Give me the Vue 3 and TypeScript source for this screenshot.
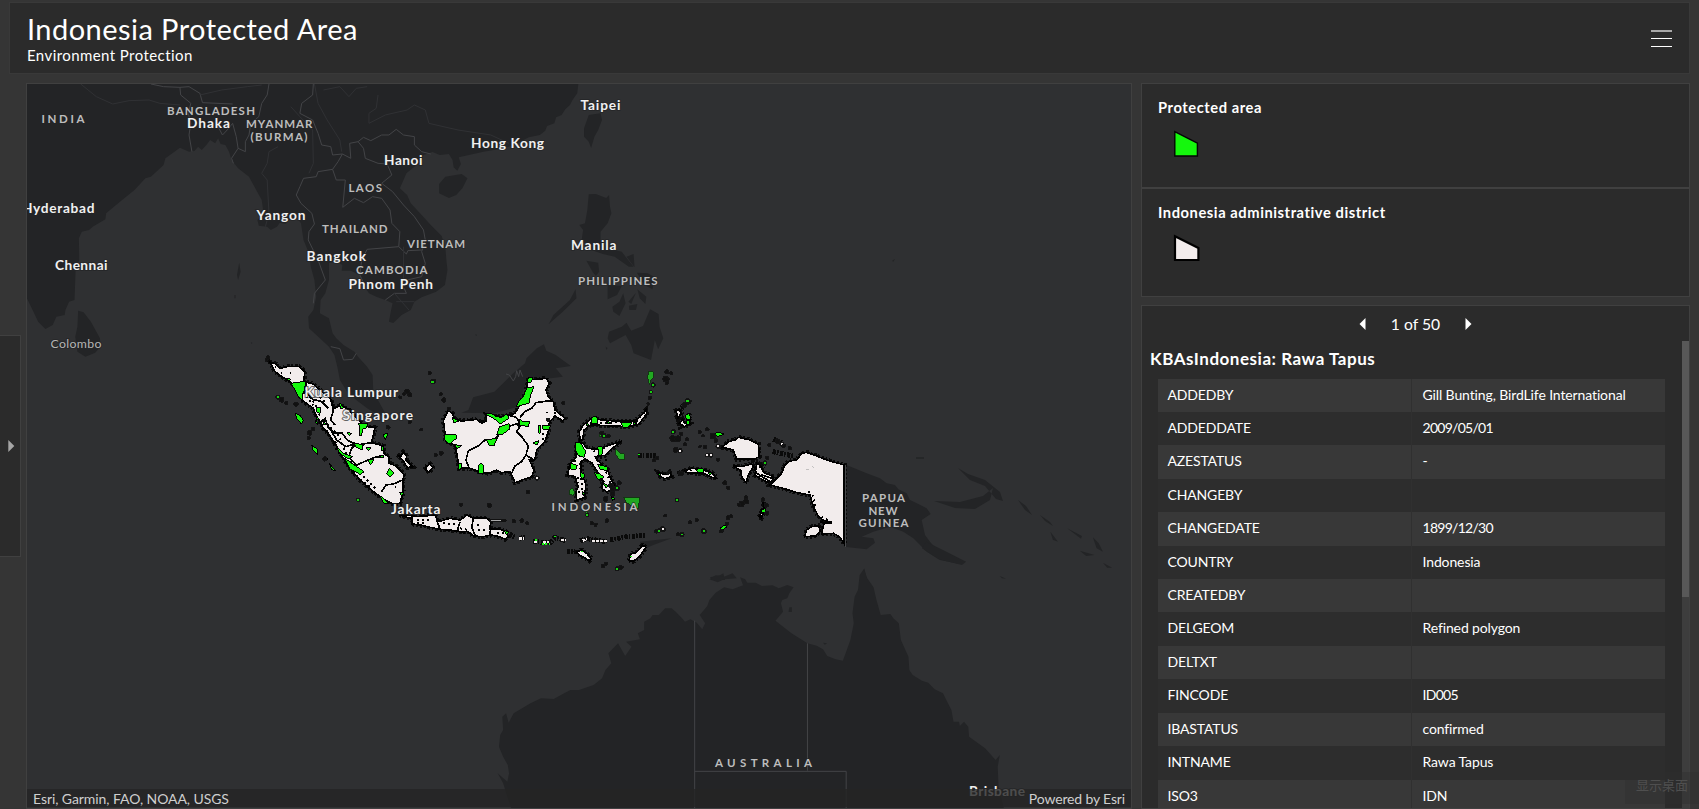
<script setup lang="ts">
interface Label { t: string; x: number; y: number; w: number; k: 'country' | 'city' | 'minor' }

const labels: Label[] = [
  { t: 'INDIA', x: 41.5, y: 123, w: 43, k: 'country' },
  { t: 'BANGLADESH', x: 167, y: 115, w: 88, k: 'country' },
  { t: 'MYANMAR', x: 246, y: 128, w: 66.5, k: 'country' },
  { t: '(BURMA)', x: 250.5, y: 140.5, w: 57, k: 'country' },
  { t: 'LAOS', x: 348.5, y: 192, w: 33.5, k: 'country' },
  { t: 'THAILAND', x: 322, y: 233, w: 65.5, k: 'country' },
  { t: 'VIETNAM', x: 407, y: 248, w: 58, k: 'country' },
  { t: 'CAMBODIA', x: 356, y: 273.5, w: 71.5, k: 'country' },
  { t: 'PHILIPPINES', x: 578, y: 285, w: 79.5, k: 'country' },
  { t: 'INDONESIA', x: 551.5, y: 511, w: 86, k: 'country' },
  { t: 'PAPUA', x: 862, y: 502, w: 43, k: 'country' },
  { t: 'NEW', x: 868.5, y: 514.5, w: 29, k: 'country' },
  { t: 'GUINEA', x: 858.5, y: 527, w: 50, k: 'country' },
  { t: 'AUSTRALIA', x: 715, y: 767, w: 97, k: 'country' },
  { t: 'Dhaka', x: 187, y: 128, w: 43, k: 'city' },
  { t: 'Hyderabad', x: 22, y: 213, w: 72.5, k: 'city' },
  { t: 'Yangon', x: 256.5, y: 220, w: 49, k: 'city' },
  { t: 'Bangkok', x: 306.5, y: 261, w: 59.5, k: 'city' },
  { t: 'Chennai', x: 55, y: 269.5, w: 52.5, k: 'city' },
  { t: 'Hanoi', x: 384, y: 165, w: 38.5, k: 'city' },
  { t: 'Hong Kong', x: 471, y: 148, w: 73, k: 'city' },
  { t: 'Phnom Penh', x: 348.5, y: 289, w: 84.5, k: 'city' },
  { t: 'Kuala Lumpur', x: 304.5, y: 397, w: 93.5, k: 'city' },
  { t: 'Singapore', x: 342.5, y: 420, w: 70.5, k: 'city' },
  { t: 'Jakarta', x: 391, y: 514, w: 49.5, k: 'city' },
  { t: 'Taipei', x: 580.5, y: 110, w: 40, k: 'city' },
  { t: 'Manila', x: 571, y: 250, w: 45.5, k: 'city' },
  { t: 'Brisbane', x: 969, y: 796, w: 56, k: 'city' },
  { t: 'Colombo', x: 50.5, y: 348, w: 51, k: 'minor' },
]

// Small islands: x, y, radius, fill key (k: outline only, g: protected, w: district)
type Islet = [number, number, number, 'k' | 'g' | 'w']
const islets: Islet[] = [
  [268, 358, 1.6, 'k'], [266, 360, 1.2, 'k'], [278, 397, 1.6, 'g'], [282, 400, 2, 'k'], [286, 403, 1.4, 'k'], [296, 404, 1.8, 'k'],
  [310, 433, 2, 'k'], [313, 429, 1.6, 'k'], [309, 438, 1.5, 'k'], [325, 459, 1.8, 'k'], [358, 500, 1.6, 'g'],
  [407, 391, 2, 'k'], [410, 395, 1.6, 'k'], [404, 394, 1.4, 'k'], [400, 397, 1.2, 'k'], [410, 422, 1.3, 'k'], [421, 430, 1.2, 'k'], [388, 427, 1.6, 'k'],
  [430, 373, 1.2, 'k'], [433, 382, 2.2, 'g'], [441, 394, 1.5, 'k'], [444, 400, 1.7, 'k'], [449, 409, 1.4, 'k'], [441, 453, 1.8, 'k'], [436, 455, 1.2, 'k'],
  [461, 505, 1.4, 'k'], [489, 505, 2, 'k'], [528, 492, 1.4, 'k'], [522, 521, 1.8, 'k'], [527, 523, 1.3, 'k'], [514, 521, 1.3, 'k'], [548, 420, 1.3, 'k'], [563, 403, 1.5, 'k'], [537, 478, 1.8, 'w'],
  [667, 372, 1.8, 'k'], [671, 373, 1.3, 'k'], [666, 379, 2.4, 'k'], [667, 383, 1.5, 'k'], [653, 385, 2, 'g'], [651, 392, 1.5, 'g'], [650, 398, 1.3, 'k'], [648, 404, 1.2, 'k'],
  [688, 401, 2.4, 'g'], [685, 405, 2, 'k'], [673, 432, 2, 'g'], [673, 438, 2.6, 'k'], [678, 439, 2.4, 'k'], [681, 434, 1.6, 'k'], [687, 439, 1.4, 'k'], [676, 450, 2, 'k'], [680, 451, 2, 'w'], [685, 444, 1.3, 'k'],
  [700, 432, 1.2, 'k'], [703, 436, 1.1, 'k'], [707, 429, 1.6, 'k'], [713, 436, 2.2, 'k'], [716, 441, 1.6, 'k'], [718, 446, 2, 'w'],
  [705, 447, 1.5, 'k'], [700, 447, 1.2, 'k'], [707, 455, 1.6, 'w'], [711, 455, 1.6, 'w'], [718, 460, 1.4, 'k'], [654, 460, 1.5, 'k'], [657, 458, 1.5, 'k'],
  [604, 436, 2, 'g'], [608, 436, 1.8, 'k'], [602, 433, 1.6, 'k'], [607, 521, 1.6, 'k'], [587, 515, 1.5, 'g'], [592, 523, 1.5, 'k'], [596, 525, 1.3, 'k'],
  [612, 490, 2.4, 'k'], [617, 488, 2, 'g'], [613, 494, 2, 'k'], [619, 483, 2, 'k'], [611, 485, 2, 'k'], [606, 499, 2, 'k'],
  [668, 473, 1.4, 'k'], [681, 473, 2, 'k'],
  [725, 483, 1.6, 'k'], [728, 488, 1.6, 'k'], [746, 501, 2.2, 'k'], [742, 504, 2.2, 'k'], [739, 505, 1.6, 'k'], [746, 497, 1.3, 'k'],
  [677, 500, 1.5, 'g'], [665, 516, 1.3, 'k'], [690, 522, 1.3, 'k'], [697, 520, 1.2, 'k'], [728, 518, 1.8, 'k'], [731, 516, 1.4, 'k'], [704, 531, 2, 'g'], [727, 524, 1.5, 'k'], [721, 531, 1.6, 'k'],
  [682, 534.5, 1.8, 'g'], [678, 534.5, 1.4, 'k'], [656, 531, 1.8, 'k'], [663, 529, 2, 'w'], [659, 531, 1.6, 'g'],
  [766, 505, 2, 'k'], [767, 513, 1.6, 'k'], [763, 500, 1.6, 'k'],
  [777, 441, 2.2, 'k'], [782, 444, 1.6, 'w'], [784, 446, 1.4, 'k'], [769, 445, 1.5, 'k'], [790, 448, 1.4, 'k'], [765, 463, 1.8, 'g'], [767, 458, 1.6, 'k'],
  [603, 566, 1.4, 'k'], [606, 564, 1.3, 'k'], [617, 569, 2, 'g'], [621, 567, 1.8, 'k'],
]

// Irregular island shape; the index varies the silhouette
const blob = (x: number, y: number, r: number, i: number): string => {
  const pts: string[] = []
  for (let n = 0; n < 8; n++) {
    const a = (n / 8) * Math.PI * 2
    const k = r * (0.75 + 0.55 * Math.abs(Math.sin(i * 7.3 + n * 2.9)))
    pts.push(`${(x + Math.cos(a) * k).toFixed(1)},${(y + Math.sin(a) * k).toFixed(1)}`)
  }
  return pts.join(' ')
}

const attributes: [string, string, boolean?][] = [
  ['ADDEDBY', 'Gill Bunting, BirdLife International'], ['ADDEDDATE', '2009/05/01', true], ['AZESTATUS', '-'], ['CHANGEBY', ''],
  ['CHANGEDATE', '1899/12/30', true], ['COUNTRY', 'Indonesia'], ['CREATEDBY', ''], ['DELGEOM', 'Refined polygon'], ['DELTXT', ''],
  ['FINCODE', 'ID005', true], ['IBASTATUS', 'confirmed'], ['INTNAME', 'Rawa Tapus'], ['ISO3', 'IDN'],
]

// District outlines, drawn once as a black rim and once filled
const west = [
  'M30 66L48 72 60 86 80 80 118 80 134 95 132 125 160 132 180 150 212 176 222 205 240 197 262 205 280 225 298 240 310 258 345 263 340 285 335 308 370 318 372 340 388 352 388 370 408 378 425 395 432 405 428 425 430 455 420 490 400 492 375 480 340 455 300 420 265 380 245 345 225 310 205 280 190 265 168 225 160 205 125 180 115 150 90 125 65 110 45 95Z',
  'M412 345L422 350 430 336 440 348 438 360 458 380 442 383 428 360Z',
  'M497 380L510 372 518 382 508 396 498 392Z',
  'M418 524L440 525 470 530 525 525 535 545 570 535 600 540 612 532 620 525 640 535 680 535 692 545 690 568 720 568 738 575 745 590 735 598 720 590 695 585 670 590 640 588 625 575 600 575 570 570 540 568 510 562 480 555 455 552 458 535 440 532Z',
]
const centre = [
  'M85 152L98 160 103 178 125 183 170 178 185 190 200 182 198 165 245 170 265 165 285 160 300 135 318 95 325 60 380 55 388 70 378 90 385 110 400 125 405 150 420 162 435 175 428 182 405 168 388 188 385 215 375 245 350 270 345 298 328 300 342 330 335 350 285 368 275 345 270 335 245 338 230 330 205 340 185 338 150 325 118 325 112 290 105 255 78 245 70 180Z',
  'M478 215L490 195 515 175 545 180 600 184 645 183 660 170 678 150 680 162 655 194 625 200 540 196 512 194 492 210 488 240 480 240Z',
  'M468 252L478 246 490 250 500 265 535 268 550 262 570 255 605 243 590 256 575 266 555 286 525 290 545 314 562 326 570 350 582 375 578 392 560 395 545 385 548 365 538 345 515 308 495 297 484 305 484 340 497 370 495 412 470 420 468 395 474 380 466 350 443 345 450 310 468 292Z',
  'M626 602L633 582 648 578 668 556 678 562 658 590 640 604Z', 'M470 576L485 570 500 580 514 596 508 602 492 592 480 586Z',
]
const east = [
  'M247 262L265 245 285 240 295 232 330 240 355 252 358 290 345 296 290 298 280 270Z',
  'M280 318L305 320 335 312 340 320 325 345 318 368 305 350 303 332Z',
  'M350 310L360 316 372 338 400 350 396 364 380 366 345 346Z',
  'M390 375L425 340 435 315 448 303 470 300 485 280 500 277 520 284 560 300 613 315 613 552 598 530 580 520 545 522 552 490 572 487 548 480 535 468 520 440 510 405 470 398 430 385Z',
  'M494 530L500 510 515 500 535 497 541 512 528 528Z',
  'M135 332L155 324 175 328 200 331 215 338 230 354 215 352 195 342 170 340 140 338Z',
  'M55 338L75 344 88 336 95 350 75 356 62 350Z',
  'M108 152L118 148 124 160 114 174Z', 'M118 190L128 178 134 190 146 192 134 200Z', 'M358 470L365 455 370 460 364 474Z', 'M370 430L376 436 372 444Z',
]
</script>

<template>
  <div class="app">
    <header class="bar">
      <div>
        <h1>Indonesia Protected Area</h1>
        <p class="sub">Environment Protection</p>
      </div>
      <svg class="burger" width="21" height="20" viewBox="0 0 21 20"><path d="M0 2H21" stroke="#c9c9c9" stroke-width="1.6" /><path d="M0 9.5H21M0 17.5H21" stroke="#fff" stroke-width="1.1" /></svg>
    </header>

    <main class="body">
      <aside class="rail">
        <button class="tab" aria-label="Expand"><svg width="7" height="12" viewBox="0 0 7 12"><path d="M.3 0L6.3 6 .3 12Z" fill="#a5a5a5" /></svg></button>
      </aside>

      <section class="panel map">
        <svg class="canvas" viewBox="27 84 1104 724" width="1104" height="724">
          <rect x="27" y="84" width="1104" height="724" fill="#2f3032" />
          <g class="land">
            <g transform="translate(0 80) scale(.3635 .33333)">
              <path d="M74 12L1591 12 1588 40 1575 60 1568 75 1555 88 1545 105 1530 112 1525 130 1505 138 1500 152 1485 165 1455 172 1430 185 1400 200 1370 208 1330 215 1290 225 1262 232 1268 252 1258 272 1248 262 1245 240 1235 222 1210 225 1190 216 1165 225 1160 245 1140 260 1118 280 1108 305 1100 325 1120 345 1130 370 1160 405 1185 435 1215 468 1225 500 1228 540 1231 570 1224 615 1200 635 1160 652 1140 665 1130 690 1105 705 1082 729 1070 725 1075 695 1080 670 1060 660 1035 650 1015 640 1000 615 990 585 965 572 940 572 942 555 928 545 905 548 905 600 895 640 882 660 880 700 905 715 915 760 925 775 945 795 975 815 985 830 1010 860 1025 885 1027 935 1050 980 1065 1010 1040 1005 1010 985 980 960 955 935 935 900 928 860 920 825 905 800 880 775 850 745 848 710 862 690 870 650 865 600 855 560 850 520 835 480 828 430 818 415 795 420 785 432 770 428 762 440 745 450 735 440 712 437 708 420 725 400 720 360 700 320 685 290 655 265 637 240 630 215 620 195 607 192 600 175 592 190 578 180 570 192 555 210 545 200 535 213 520 215 495 203 480 215 455 235 450 255 430 275 415 290 400 295 370 330 330 365 292 400 290 418 255 440 245 450 225 455 217 475 218 540 208 570 205 660 190 665 180 690 178 705 155 710 145 735 125 747 105 725 92 695 74 655Z" />
              <path d="M215 692L230 697 250 725 275 775 276 800 262 818 235 830 213 815 207 770 213 740ZM1225 290L1270 282 1286 295 1272 325 1255 345 1235 354 1208 340 1208 312ZM658 548L662 575 655 600 652 585ZM645 645h3v10h-3zM690 785l4 4-2 4z" />
            </g>
            <g transform="translate(400 80) scale(.4719 .33333)">
              <path d="M400 105L425 100 428 120 420 150 412 170 405 204 400 185 390 170 390 145ZM400 343L415 342 437 354 443 345 445 380 448 400 440 430 425 455 425 480 440 505 470 515 478 530 495 560 485 560 470 545 455 530 430 522 405 510 385 480 388 450 380 435 392 430 397 390ZM395 542L420 548 422 575 415 588 408 575ZM372 628L374 655 345 695 315 733 325 705 360 660ZM440 615L470 618 460 645 440 658ZM450 680L465 665 473 640 478 670 465 708 452 695ZM484 665L500 638 490 672ZM502 578L525 580 540 592 535 628 518 615ZM503 628L522 650 520 672 508 655ZM485 677L503 672 500 690 486 690ZM440 775L443 755 470 740 480 728 490 752 515 738 530 688 548 702 550 740 558 775 547 808 540 780 532 840 510 828 495 820 490 795 478 765 445 790ZM480 530l15-8 2 40zM436 800l4 4-3 6z" />
              <path d="M130 998L145 990 155 952 200 935 240 880 265 850 268 835 290 805 305 793 310 812 330 825 362 858 330 865 345 890 320 895 270 895 250 980 200 1000ZM1043 542l6-6-4 10zM160 762l3 3-2 4z" />
            </g>
            <g transform="translate(640 360) scale(.33333)">
              <path d="M612 312L680 340 720 355 740 370 765 375 775 388 800 400 810 420 835 432 860 445 872 462 845 480 855 525 870 545 900 580 960 600 960 612 900 600 860 575 820 535 790 515 750 500 700 515 665 530 700 535 705 548 680 568 612 560ZM828 292h24v4h-24zM665 645l8-20 8 35h-20zM210 652l30-6 10-6 5 20h-40zM0 545L95 535 40 555 0 572Z" />
            </g>
            <path d="M934 501L955 508 975 509 990 500 993 488 983 496 960 502ZM958 468L968 474 985 480 1000 492 1003 501 996 499 985 486 970 480ZM1018 500l8 6 6 9-7-5zM1040 515l10 7 3 4-8-5z" />
            <g transform="translate(480 500) scale(.4209 .33333)">
              <path d="M75 927L65 890 55 850 42 820 65 845 69 820 66 795 55 770 45 740 48 705 55 690 53 650 62 640 68 668 80 640 120 610 145 595 175 597 200 580 215 570 235 570 270 555 290 535 298 510 312 490 305 460 328 430 345 468 360 440 347 425 380 418 375 400 390 390 390 365 405 355 410 345 425 345 440 325 455 325 465 335 480 355 487 365 500 358 515 368 528 388 535 370 522 345 540 318 545 300 560 278 580 262 600 268 625 256 618 232 630 238 635 248 655 248 670 258 695 256 710 265 730 255 745 262 735 280 730 295 718 300 715 310 720 335 702 362 740 400 778 430 800 437 815 448 825 468 845 478 862 482 870 455 880 420 888 370 885 340 890 290 898 270 902 225 912 207 920 235 935 262 942 300 952 345 975 342 982 355 995 370 1000 420 1018 470 1020 510 1028 525 1050 542 1065 548 1080 568 1100 580 1110 605 1120 630 1125 665 1138 665 1140 678 1150 665 1160 680 1162 710 1200 745 1225 780 1235 765 1230 800 1232 860 1245 927Z" />
              <path d="M545 238L560 226 580 230 600 220 610 235 580 238 565 247ZM735 322h6v14h-8zM815 428l10 2-6 4zM1060 125L1100 150 1155 185 1145 195 1090 178 1050 145ZM1355 95l12 20 6 10-12-6zM1395 85L1430 108 1428 116ZM1456 112L1470 130 1480 155 1465 145ZM1425 152L1460 165 1440 168ZM1480 188L1502 203 1490 203ZM1235 228L1250 236 1240 235Z" />
            </g>
          </g>

          <g class="lines">
            <g transform="translate(0 80) scale(.3635 .33333)">
              <path d="M415 12L450 20 495 22 497 45 525 70 518 100 525 130 520 165 528 215M495 22L520 20 550 40 557 68 640 72M600 140L612 165 625 150 640 130 650 170 655 205 637 235 642 250M740 12L735 45 720 70 712 110 690 130 685 165 675 185 675 215 655 205M862 12L860 45 830 70 825 100 860 120 875 160 885 195 910 200 915 225 942 222 930 245 915 268 875 275 870 290 835 295 825 320 815 345 828 370 858 400 865 432 850 455 848 480 875 540 895 600 865 640 862 670" />
              <path d="M942 222L965 235 962 190 985 185 1000 205 1005 235 1040 250 1065 252 1078 285 1050 310 1080 335 1110 375 1140 410 1165 450 1170 480 1160 515 1170 550 1160 590 1120 600M985 185L1000 172 1020 182 1050 165 1070 165 1090 148 1110 165 1140 170 1140 195 1160 215 1185 222M915 268L925 300 950 300 943 382 975 355 1000 368 1025 350 1050 355 1073 390 1078 430 1100 455 1097 500 1010 508 995 540 990 585 1003 615M1097 500L1118 522 1122 512 1160 510M1060 660L1085 640 1118 640 1112 625M910 800L935 806 945 840 970 838 980 820" />
            </g>
            <g transform="translate(420 360) scale(.33333)"><path d="M258 42L268 45 280 63 287 50 290 32 296 50 300 30 308 50" /></g>
            <g transform="translate(480 500) scale(.4209 .33333)"><path d="M510 362V927M778 430V812M510 814H870V927" /></g>
          </g>
          <g class="faint" transform="translate(0 80) scale(.3635 .33333)">
            <path d="M222 12L265 50 310 72 355 62 410 60 440 70 495 75M550 45L610 30 680 20 720 15M865 12L875 70 900 120 935 180 940 215M800 80L825 110 860 150 862 250 850 280M765 200L740 215 735 250 720 280 735 300 740 400 730 440M1040 45L1035 85 1015 100 1015 130 1060 105 1120 90 1140 75 1170 90 1180 130 1260 150 1350 165 1400 190M890 30L935 20 960 50 980 25 1010 20M1110 600V500M1085 640L1125 690M1090 665H1140" />
          </g>

          <g class="overlay">
            <g transform="translate(260 340) scale(.33333)">
              <path v-for="d in west" :key="d" :d="d" class="rim" />
              <path v-for="d in west" :key="d" :d="d" class="district" />
              <path class="province" d="M140 130L132 150 158 178 185 185 205 205M212 176L220 210 212 240 225 255M178 250L195 235 205 262 225 280 245 278 262 300 290 315 335 308M212 270L230 300 258 320 285 312M268 345L275 325 290 310M265 350L290 375 320 362 345 352 372 350M365 455L378 435 400 432 428 420" />
              <path class="province" d="M530 540L540 568M600 545L592 572 615 580M640 538L635 560 645 585M692 560L690 585" />
              <path class="speckle" d="M45 82h3M62 100h3M90 100h4M150 170L180 215 175 240M190 240L235 285 250 320 262 350 300 400 350 450M470 540h40M470 550h30M550 550L585 552M600 565l25 5M655 570h20M650 555h8M710 580h25M405 440h3M265 280h12M185 255L210 290M120 145L160 195M180 170l18 20M200 270L230 330 280 400 330 440" />
              <path class="green" d="M92 130L136 124 134 150 126 165 128 184 114 168 106 150ZM106 220L120 226 130 240 124 252 110 236ZM170 201L182 203 180 220 169 215ZM238 188L252 203 242 207ZM296 250L324 250 318 264 308 268 304 288 298 288 300 268ZM281 308L310 316 306 330 288 322ZM228 318L250 340 278 350 264 356 240 340ZM254 354L275 370 312 395 302 404 270 387ZM380 402L388 386 402 398 390 412ZM155 316L174 328 174 344 160 332ZM208 370L226 392 214 388ZM322 358L342 360 332 374ZM368 284L384 280 376 300ZM418 458L432 456 426 468ZM356 345L372 348 366 355ZM355 462L387 492 373 492ZM195 350l10 8-10-2zM80 115l14 3-8 6zM165 225l14 14-8 0zM318 322l16 2-8 8zM733 572l14 4-8 8zM188 240l10 12-8 2zM262 278l14 2-8 6zM364 318l8 2-2 12-6-2zM168 240l6 14-6-4zM218 300l12 8-8 0z" />
              <rect x="688" y="536" width="52" height="11" rx="4" fill="#111" />
              <path class="madura" d="M694 541.500H722" />
            </g>

            <g transform="translate(420 360) scale(.33333)">
              <path v-for="d in centre" :key="d" :d="d" class="rim" />
              <path v-for="d in centre" :key="d" :d="d" class="district" />
              <path class="province" d="M148 325L138 300 145 272 175 258 195 240 225 238 245 215 270 198 300 188 288 172 265 165M300 172L315 155 335 145 348 128 375 124 400 122M288 190L300 200 290 215 305 230 325 258 318 285 345 302M318 285L305 305 285 318 275 340M178 185L192 182" />
              <path class="speckle" d="M382 155v5M402 160h5M372 205l-5 40M335 300v25M485 255L480 290M520 275L560 260M465 300L455 330M480 310L488 400M530 300L560 340 575 380M475 395h15M495 190L660 185M650 185L675 155M540 350l20 25M550 325l10 10M475 350v20M560 300l-20-6" />
              <path class="green" d="M72 225L108 225 110 235 103 240 88 252 74 240ZM96 172L116 183 102 188ZM190 158L215 162 230 170 245 172 262 161 267 175 240 192 225 178ZM238 200L268 191 270 207 245 224 230 224ZM200 240L232 234 222 257 208 257ZM325 54L340 53 332 68 320 68ZM322 83L342 80 332 105 327 130 288 140 298 122 308 112ZM298 178L312 186 330 185 324 200 300 195ZM366 197L392 197 387 209 368 207ZM174 318L184 308 192 320 190 342 175 340ZM338 250L357 241 352 254ZM115 310L125 312 122 330 115 328ZM104 254L126 257 112 266ZM355 198L363 198 361 220 355 218Z" />
              <path class="green" d="M468 246L482 250 498 275 492 292 476 287 466 270ZM533 260L547 260 547 280 538 290ZM515 172L530 168 534 192 516 190ZM603 188L637 188 622 203 608 201ZM453 310L472 316 467 330 453 327ZM523 338L540 341 552 352 535 360ZM484 336L494 345 490 360 481 348ZM533 313L562 321 562 332 540 328ZM500 188l8 6-10 3zM550 370l16 7-8 8zM560 184l12 3-8 6zM572 410l14 5-8 7zM486 395l8 4-4 8zM576 392l8 8-6 6zM640 186l10 4-10 4z" />
              <path class="green deep" d="M610 412L658 412 656 447 635 438 620 428ZM447 392L455 384 465 395 461 406 449 404ZM586 266L600 280 612 282 614 299 598 299 588 285ZM685 36L698 33 702 50 692 62 688 74 683 52ZM540 222h14l-4 8h-10zM560 228l10 4-8 2zM498 455h5v14h-5z" />
              <path class="chain" d="M268 522L285 532M298 535L315 532M340 545L392 548 405 532 438 542M480 542L500 536 560 545M570 540L620 530 675 526M440 575L465 575M655 285L712 288" />
              <path class="chain-w" d="M298 536H312M342 546H350M368 548L386 546M424 540H438M488 542L502 538M515 544H562" />
              <path class="chain-g" d="M345 540H352M366 552L390 553M402 530H408M655 284H665M630 590L640 588M482 574l6 2" />
            </g>

            <g transform="translate(640 360) scale(.33333)">
              <path class="chain" d="M400 238L425 248M398 275L460 288M112 340L135 335M55 342L95 346M335 300L375 320M135 130L110 165 120 200 145 190 150 160" />
              <path v-for="d in east" :key="d" :d="d" class="rim" />
              <path v-for="d in east" :key="d" :d="d" class="district" />
              <path class="province" d="M340 318L350 340 398 370M355 352L365 345 395 355M540 486L575 490" />
              <path class="speckle" d="M150 330l10 6M195 332l10 5M505 395L520 410 525 440M545 470L575 488M358 318l6 8" />
              <path class="green" d="M168 328L188 324 192 336 173 338ZM203 336l14 3-8 5zM53 338l10 2-3 10zM136 166L148 160 152 178 140 180ZM140 182h10v12h-10zM222 222L236 216 252 222 234 230ZM136 128l8-6 8 4-8 8zM240 505l14-10 6 6-14 12zM366 448l10-2 0 10-10 2z" />
              <path d="M498 330l10-3M515 318l6 6" stroke="#aaa" stroke-width="2" fill="none" />
              <path d="M616 314V560" stroke="#48494b" stroke-width="3" />
            </g>

            <g v-for="(p, i) in islets" :key="i">
              <polygon :points="blob(p[0], p[1], p[2] * 1.1, i)" class="islet" />
              <rect :x="p[0] - p[2] * 0.7" :y="p[1] - p[2] * 0.4" :width="p[2] * 1.3" :height="p[2] * 0.9" :class="['dot', p[3]]" />
            </g>
          </g>

          <g>
            <text v-for="l in labels" :key="l.t" :x="l.x" :y="l.y" :textLength="l.w" :class="['label', l.k]">{{ l.t }}</text>
          </g>
        </svg>
        <footer class="attribution"><span class="credits">Esri, Garmin, FAO, NOAA, USGS</span><span class="powered">Powered by Esri</span></footer>
      </section>

      <div class="side">
        <section class="panel legend">
          <div class="entry">
            <h2>Protected area</h2>
            <svg width="28" height="28" viewBox="0 0 28 28"><path d="M1.800 1.700L24.400 13.200V26H1.800Z" fill="#15f70d" stroke="#050505" stroke-width="1.4" /></svg>
          </div>
          <div class="entry second">
            <h2>Indonesia administrative district</h2>
            <svg width="28" height="28" viewBox="0 0 28 28"><path d="M2 2.200L25.400 14V26H2Z" fill="#f2ecec" stroke="#000" stroke-width="2.2" /></svg>
          </div>
        </section>

        <section class="panel details">
          <nav class="pager">
            <svg width="7" height="12" viewBox="0 0 7 12"><path d="M6.5 0L.5 6 6.5 12Z" fill="#fff" /></svg>
            <span class="count">1 of 50</span>
            <svg width="7" height="12" viewBox="0 0 7 12"><path d="M.5 0L6.5 6 .5 12Z" fill="#fff" /></svg>
          </nav>
          <div class="scroller">
            <div class="content">
              <h3>KBAsIndonesia: Rawa Tapus</h3>
              <div class="grid">
                <div v-for="row in attributes" :key="row[0]" class="row"><span class="key">{{ row[0] }}</span><span :class="['val', { num: row[2] }]">{{ row[1] }}</span></div>
              </div>
            </div>
            <div class="track"><div class="thumb"></div></div>
          </div>
        </section>
      </div>
    </main>
    <div class="tooltip">显示桌面</div>
  </div>
</template>

<style>
body { margin: 0; background: #353535; overflow: hidden; }
</style>

<style scoped>
.app { position: relative; box-sizing: border-box; width: 1699px; height: 809px; padding: 2px 9px 0 0; background: #353535; color: #fff; font-family: Lato, "Open Sans", "Noto Sans CJK SC", sans-serif; overflow: hidden; display: flex; flex-direction: column; }
h1, h2, h3, p { margin: 0; font-weight: 400; white-space: nowrap; }
.panel, .bar { box-sizing: border-box; background: #2b2b2b; border: 1px solid #404040; }
.bar { height: 72px; margin-left: 9px; padding: 0 17px 0 17px; display: flex; justify-content: space-between; align-items: flex-start; border-color: #393939; flex: none; }
h1 { font-size: 29px; line-height: 34px; margin-top: 9px; letter-spacing: .45px; }
.sub { font-size: 15px; line-height: 18px; letter-spacing: .42px; }
.burger { margin-top: 26px; }
.body { display: flex; flex: 1; min-height: 0; padding-top: 9px; }
.rail { width: 26px; flex: none; padding-top: 252px; }
.tab { box-sizing: border-box; display: flex; align-items: center; width: 21px; height: 222px; padding: 0 0 0 8px; border: 1px solid #404040; border-left: 0; background: #2b2b2b; }
.map { position: relative; width: 1106px; height: 726px; flex: none; overflow: hidden; }
.canvas { display: block; }
.attribution { position: absolute; left: 0; right: 0; bottom: 1px; height: 18px; padding: 0 6px; display: flex; justify-content: space-between; background: rgba(36, 36, 36, .8); color: #cfcfcf; font-size: 14px; line-height: 19px; }
.credits { letter-spacing: -.07px; }
.powered { letter-spacing: -.15px; }
.side { width: 549px; margin-left: 9px; display: flex; flex-direction: column; gap: 8px; }
.legend { height: 214px; flex: none; }
.entry { box-sizing: border-box; height: 105px; padding: 14px 0 0 16px; border-bottom: 2px solid #404040; }
.entry.second { border: 0; }
h2 { font-size: 14.7px; font-weight: 700; line-height: 18px; letter-spacing: .57px; }
.entry svg { display: block; margin: 14px 0 0 15px; }
.entry.second svg { margin-top: 13px; }
.details { height: 504px; flex: none; overflow: hidden; }
.pager { display: flex; align-items: center; justify-content: center; gap: 24.5px; height: 35px; }
.count { font-size: 15.7px; line-height: 20px; }
.scroller { display: flex; height: 467px; overflow: hidden; }
.content { flex: 1; padding-left: 8px; }
h3 { font-size: 17px; font-weight: 700; line-height: 20px; margin-top: 8px; letter-spacing: .53px; }
.grid { width: 507px; margin: 9.5px 0 0 8px; }
.row { display: grid; grid-template-columns: 254px 1fr; height: 33.43px; font-size: 14px; line-height: 32px; background: #2d2d2d; }
.row:nth-child(odd) { background: #383838; }
.row span { padding-left: 9.5px; white-space: nowrap; }
.row .key { border-right: 1px solid #303030; letter-spacing: -.15px; }
.row .val { padding-left: 10.5px; letter-spacing: -.12px; }
.row .val.num { letter-spacing: -.72px; }
.track { width: 7px; background: #3d3d3d; }
.thumb { height: 256px; background: #585858; }
.tooltip { position: absolute; right: 0; bottom: 5px; width: 63px; height: 32px; padding-left: 11px; font-size: 13px; line-height: 26px; color: #4f4f4f; background: rgba(46, 46, 46, .35); white-space: nowrap; }

.land { fill: #232426; }
.lines path, .faint path { fill: none; stroke: #434447; stroke-width: 1; vector-effect: non-scaling-stroke; }
.faint path { stroke: #303134; }
.overlay { shape-rendering: crispEdges; }
.rim { fill: none; stroke: #0a0a0a; stroke-width: 14; stroke-dasharray: 5 6 8 5; }
.district { fill: #f2ecec; stroke: #000; stroke-width: 5; }
.province { fill: none; stroke: #000; stroke-width: 5; }
.speckle { fill: none; stroke: #000; stroke-width: 6; stroke-dasharray: 6 9; }
.green { fill: #15f70d; stroke: #000; stroke-width: 3; }
.green.deep { fill: #22a822; stroke: #123812; }
.madura { stroke: #aaa; stroke-width: 4; }
.chain { fill: none; stroke: #0a0a0a; stroke-width: 15; stroke-dasharray: 10 3 5 4; }
.chain-w { fill: none; stroke: #f2ecec; stroke-width: 7; stroke-dasharray: 9 3; }
.chain-g { fill: none; stroke: #15f70d; stroke-width: 5; stroke-dasharray: 6 4; }
.islet { fill: #111; stroke: #141415; stroke-width: 1; }
.dot.k { fill: none; }
.dot.g { fill: #18d012; }
.dot.w { fill: #f2ecec; }
.label { paint-order: stroke; stroke: rgba(35, 36, 38, .7); stroke-width: 2px; }
.country { fill: #bdbdbd; font-size: 11.5px; font-weight: 700; stroke-width: 1.5px; }
.city { fill: #f0f0f0; font-size: 13.7px; font-weight: 700; }
.minor { fill: #b5b5b5; font-size: 12.3px; }
</style>
